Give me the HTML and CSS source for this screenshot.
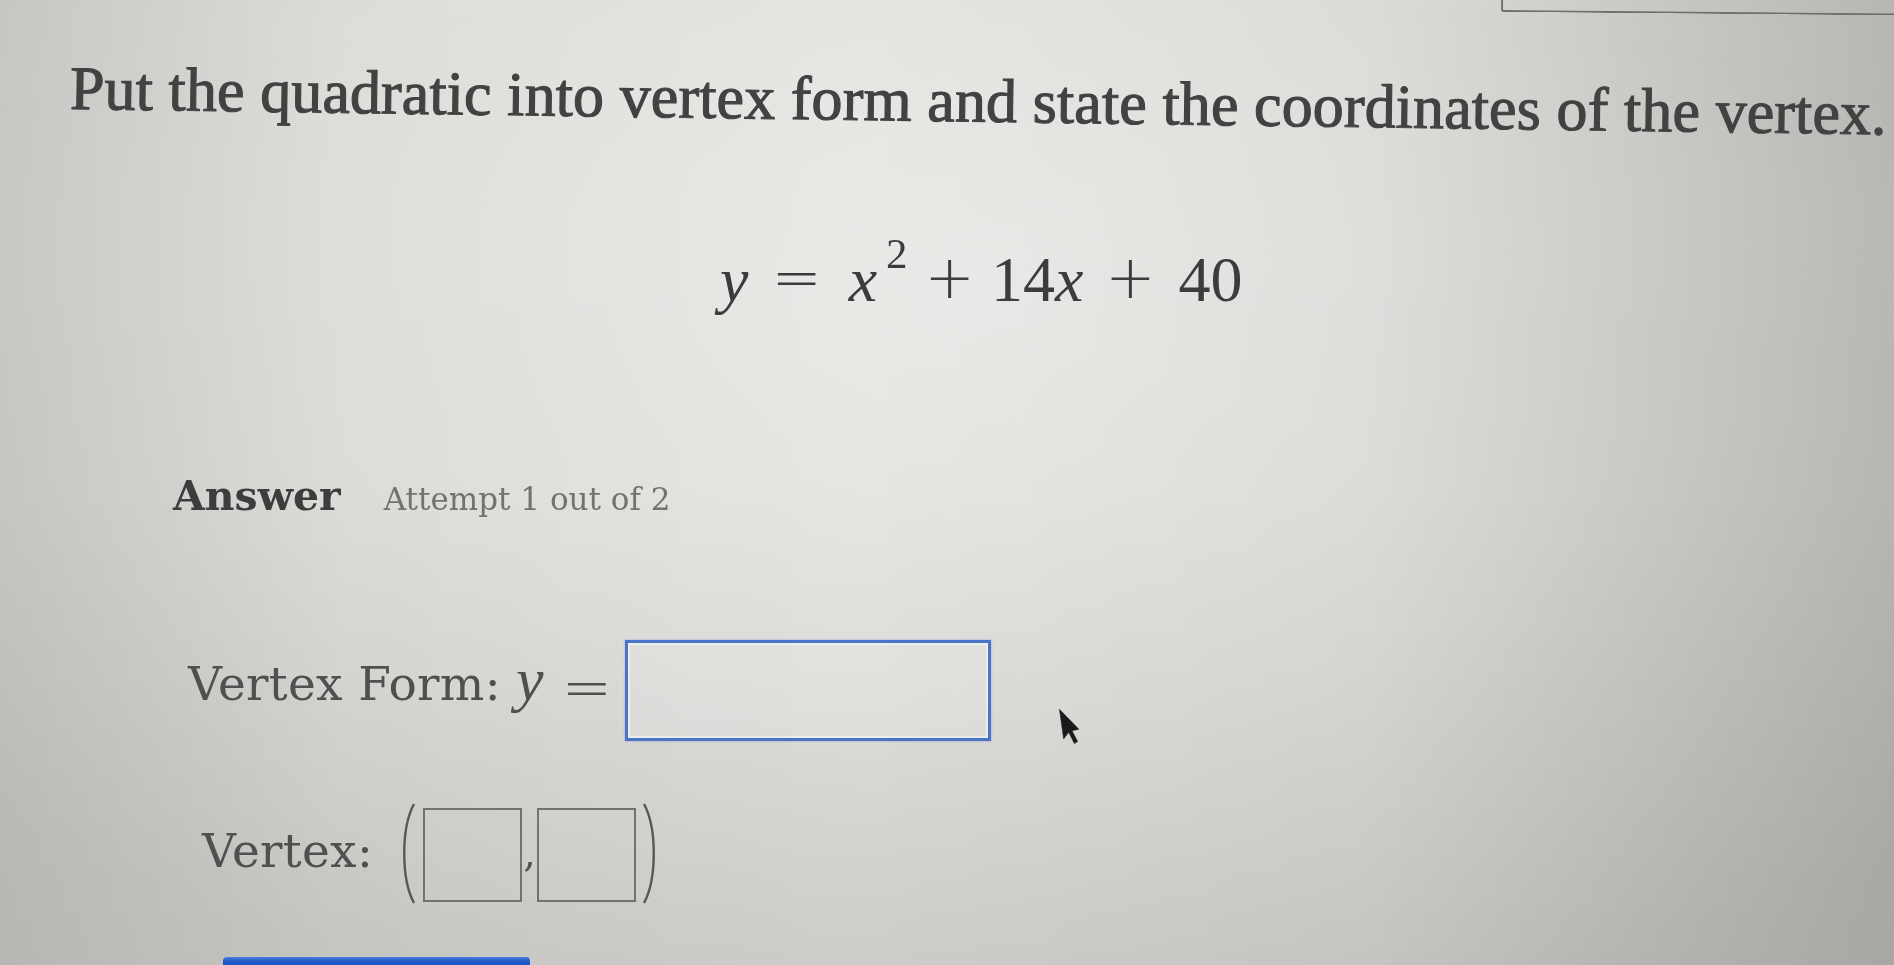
FILE: index.html
```html
<!DOCTYPE html>
<html lang="en">
<head>
<meta charset="utf-8">
<title>Vertex form</title>
<link rel="stylesheet" href="styles.css">
</head>
<body>
<div class="page">
  <div class="topbar"><div class="tab"></div></div>
  <h1 class="title">Put the quadratic into vertex form and state the coordinates of the vertex.</h1>
  <div class="equation"><span class="mi">y</span><span class="mo eq-eq">=</span><span class="mi eq-x1">x</span><span class="sup">2</span><span class="mo eq-p1">+</span><span class="mn eq-14">14</span><span class="mi">x</span><span class="mo eq-p2">+</span><span class="mn eq-40">40</span></div>
  <div class="answer-row"><span class="answer">Answer</span><span class="attempt">Attempt 1 out of 2</span></div>
  <div class="form-row">
    <div class="form-label">Vertex Form:<span class="var">y</span><span class="op">=</span></div>
    <div class="input-wide"></div>
  </div>
  <div class="vertex-row">
    <div class="vertex-label">Vertex:</div>
    <svg class="paren paren-left" viewBox="0 0 18 103" width="18" height="103"><path d="M16 2 C 3 26, 3 77, 16 101"/></svg>
    <div class="input-small"></div>
    <span class="comma">,</span>
    <div class="input-small"></div>
    <svg class="paren paren-right" viewBox="0 0 18 103" width="18" height="103"><path d="M2 2 C 15 26, 15 77, 2 101"/></svg>
  </div>
  <div class="button"></div>
  <svg class="cursor" viewBox="0 0 18 40" width="18" height="40"><path d="M1 1 L1 31 L7 25 L11 37 L14.5 35.5 L10.5 24 L17.5 23.5 Z"/></svg>
</div>
</body>
</html>
```
FILE: styles.css
```css
html, body {
  margin: 0;
  padding: 0;
}

body {
  width: 1894px;
  height: 965px;
  overflow: hidden;
  background:
    linear-gradient(90deg, rgba(0,0,0,0.09) 0%, rgba(0,0,0,0.02) 18%, rgba(0,0,0,0) 45%, rgba(0,0,0,0.03) 72%, rgba(0,0,0,0.17) 100%),
    linear-gradient(180deg, rgba(255,255,255,0.05) 0%, rgba(0,0,0,0) 50%, rgba(0,0,0,0.05) 100%),
    radial-gradient(ellipse 70% 80% at 52% 30%, #eaeae8 0%, #e0e0dd 55%, #d3d3cf 100%);
}

.page {
  position: relative;
  height: 965px;
  display: flex;
  flex-direction: column;
  align-items: flex-start;
  filter: blur(0.45px);
}

.topbar {
  align-self: stretch;
  display: flex;
  justify-content: flex-end;
  height: 13px;
}

.tab {
  width: 391px;
  height: 10px;
  border-left: 2px solid #6f6f6c;
  border-bottom: 2.5px solid #6f6f6c;
  border-bottom-left-radius: 3px;
  transform: rotate(0.5deg);
  transform-origin: 0 100%;
}

.title {
  margin: 45px 0 0 70px;
  font-family: "Liberation Serif", "Times New Roman", serif;
  font-weight: 400;
  font-size: 62px;
  line-height: 62px;
  letter-spacing: 0.1px;
  color: #424242;
  -webkit-text-stroke: 1.1px #424242;
  white-space: nowrap;
  transform: rotate(0.8deg);
  transform-origin: 0 50%;
}

.equation {
  margin: 129px 0 0 720px;
  font-family: "Liberation Serif", "Times New Roman", serif;
  font-size: 64px;
  line-height: 64px;
  color: #3c3c3c;
  white-space: nowrap;
}

.equation span {
  display: inline-block;
}

.mi {
  font-style: italic;
}

.mo {
  font-family: "DejaVu Sans", sans-serif;
  font-size: 60px;
  line-height: 0;
  font-weight: 300;
  vertical-align: 3px;
}

.sup {
  font-size: 43px;
  line-height: 0;
  vertical-align: 33px;
  margin-left: 9px;
}

.eq-eq { margin-left: 23px; }
.eq-x1 { margin-left: 27px; }
.eq-p1 { margin-left: 17px; }
.eq-14 { margin-left: 16px; }
.eq-p2 { margin-left: 22px; }
.eq-40 { margin-left: 23px; }

.answer-row {
  margin: 164px 0 0 173px;
  display: flex;
  align-items: baseline;
  gap: 43px;
}

.answer {
  font-family: "DejaVu Serif", serif;
  font-weight: 700;
  font-size: 41px;
  line-height: 41px;
  color: #3d3d3d;
}

.attempt {
  font-family: "DejaVu Serif", serif;
  font-size: 31px;
  line-height: 31px;
  color: #727270;
}

.form-row {
  margin: 123px 0 0 188px;
  display: flex;
  align-items: flex-start;
}

.form-label {
  margin-top: 20px;
  font-family: "DejaVu Serif", serif;
  font-size: 47px;
  line-height: 47px;
  letter-spacing: 0.3px;
  color: #505050;
  white-space: nowrap;
}

.var {
  font-family: "Liberation Serif", "Times New Roman", serif;
  font-style: italic;
  font-size: 62px;
  line-height: 0;
  margin-left: 15px;
}

.op {
  font-family: "DejaVu Sans", sans-serif;
  font-size: 60px;
  font-weight: 300;
  margin-left: 18px;
  vertical-align: -8px;
  line-height: 0;
}

.input-wide {
  margin-left: 13px;
  width: 360px;
  height: 95px;
  border: 3px solid #4c74c6;
  box-shadow: inset 0 0 0 2px rgba(255,255,255,0.45), 0 0 2px rgba(90,120,200,0.5);
  background: rgba(255,255,255,0.12);
}

.vertex-row {
  margin: 61px 0 0 202px;
  display: flex;
  align-items: flex-start;
}

.vertex-label {
  margin-top: 25px;
  font-family: "DejaVu Serif", serif;
  font-size: 47px;
  line-height: 47px;
  letter-spacing: 0.3px;
  color: #505050;
}

.paren {
  display: block;
  fill: none;
  stroke: #585858;
  stroke-width: 2.4;
}

.paren-left {
  margin-left: 25px;
}

.paren-right {
  margin-left: 6px;
}

.input-small {
  margin-top: 6px;
  width: 95px;
  height: 90px;
  border: 2px solid #727272;
}

.paren-left + .input-small {
  margin-left: 7px;
}

.comma {
  width: 15px;
  margin-top: 30px;
  text-align: center;
  font-family: "DejaVu Serif", serif;
  font-size: 40px;
  line-height: 40px;
  color: #555;
}

.button {
  margin: 52px 0 0 223px;
  width: 307px;
  height: 40px;
  background: linear-gradient(180deg, #4a80e0 0px, #2259c9 4px, #1f55c4 100%);
  border-radius: 4px 4px 0 0;
}

.cursor {
  position: absolute;
  left: 1061px;
  top: 707px;
  fill: #1a1a1a;
  stroke: #2a2a2a;
  stroke-width: 0.6;
  transform: rotate(-8deg);
}
```
